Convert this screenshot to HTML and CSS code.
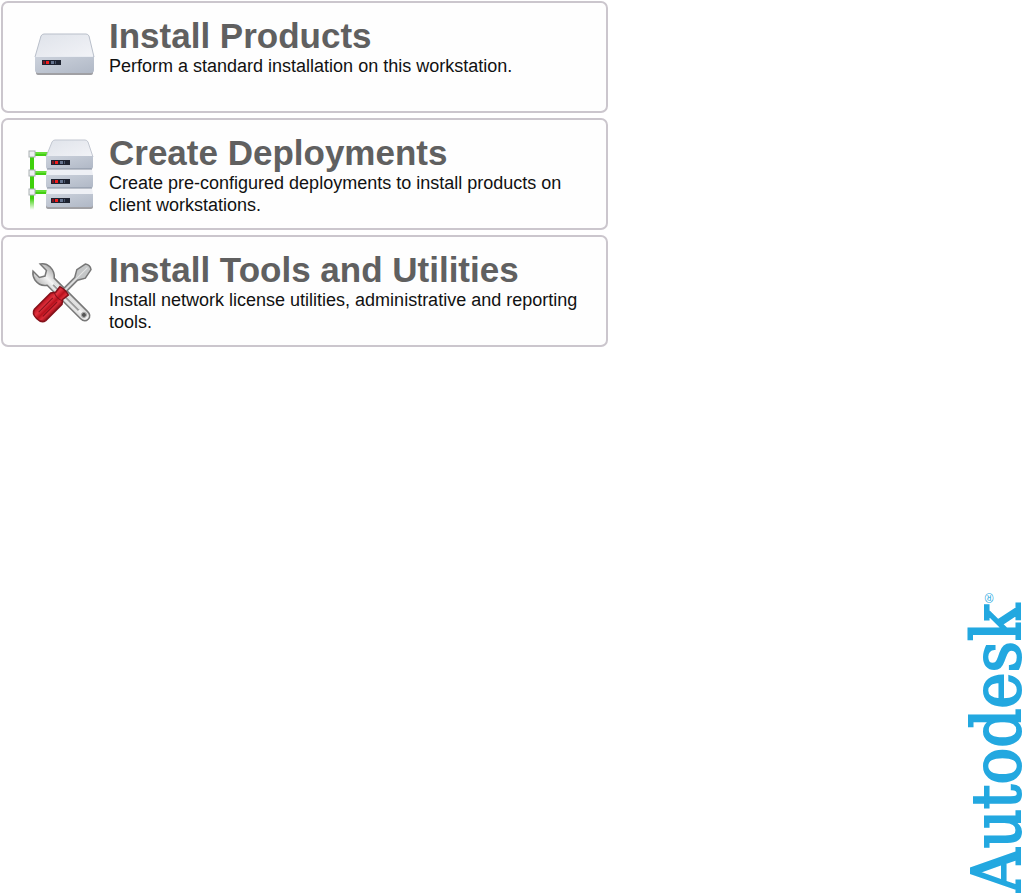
FILE: index.html
```html
<!DOCTYPE html>
<html lang="en">
<head>
    <meta charset="UTF-8">
    <meta name="viewport" content="width=device-width, initial-scale=1.0">
    <title>Autodesk Setup</title>
    <link rel="stylesheet" href="styles.css">
</head>
<body>
    <!-- shared icon parts -->
    <svg class="defs" width="0" height="0" aria-hidden="true">
        <defs>
            <linearGradient id="top" x1="0" y1="0" x2="1" y2="1">
                <stop offset="0" stop-color="#dfe3ea"/>
                <stop offset="1" stop-color="#f2f3f7"/>
            </linearGradient>
            <linearGradient id="front" x1="0" y1="0" x2="1" y2="1">
                <stop offset="0" stop-color="#ccd2dc"/>
                <stop offset="1" stop-color="#b0b8c6"/>
            </linearGradient>
            <linearGradient id="cable" x1="0" y1="0" x2="0" y2="1">
                <stop offset="0.8" stop-color="#3fd00c"/>
                <stop offset="1" stop-color="#3fd00c" stop-opacity="0"/>
            </linearGradient>
            <linearGradient id="steel" x1="0" y1="0" x2="1" y2="0">
                <stop offset="0" stop-color="#bcbcbc"/>
                <stop offset="0.5" stop-color="#f4f4f4"/>
                <stop offset="1" stop-color="#b0b0b0"/>
            </linearGradient>
            <linearGradient id="grip" x1="0" y1="0" x2="1" y2="0">
                <stop offset="0" stop-color="#b80f1c"/>
                <stop offset="0.3" stop-color="#e23440"/>
                <stop offset="0.55" stop-color="#b9101c"/>
                <stop offset="0.75" stop-color="#db2c38"/>
                <stop offset="1" stop-color="#96101a"/>
            </linearGradient>
            <g id="panel">
                <rect width="19" height="5" fill="#1d2230"/>
                <rect x="1" y="1" width="2" height="3" fill="#7c1520"/>
                <rect x="4" y="1" width="3" height="3" fill="#f51c1c"/>
                <rect x="9" y="1" width="3" height="3" fill="#65738e"/>
                <rect x="13" y="1" width="1" height="3" fill="#48546c"/>
            </g>
        </defs>
    </svg>

    <div class="page">
        <main class="menu">
            <a class="card" href="#products">
                <svg class="icon" viewBox="0 0 70 76" aria-hidden="true">
                    <path d="M9 45h57v3q0 2-3 2H12q-3 0-3-2z" fill="#77787e" opacity="0.7"/>
                    <path d="M14 11q1-2 3-2h42q2 0 3 2l5 21H8z" fill="url(#top)" stroke="#b9bfca"/>
                    <path d="M8 31h59v14q0 3-3 3H11q-3 0-3-3z" fill="url(#front)"/>
                    <path d="M9 31.500h57" stroke="#e9ecf2"/>
                    <use href="#panel" x="15" y="35"/>
                </svg>
                <span class="text">
                    <strong class="title">Install Products</strong>
                    <span class="desc">Perform a standard installation on this workstation.</span>
                </span>
            </a>

            <a class="card" href="#deployments">
                <svg class="icon" viewBox="0 1 70 76" aria-hidden="true">
                    <path d="M3 11h4v58H3z" fill="url(#cable)"/>
                    <path d="M5 13h16M5 32h16M5 51h16" stroke="#43cf12" stroke-width="4"/>
                    <path d="M8 12h12M8 31h12M8 50h12" stroke="#8af05e"/>
                    <g fill="#eef0f2" stroke="#a9afb2">
                        <rect x="2" y="10" width="6" height="6"/>
                        <rect x="2" y="29" width="6" height="6"/>
                        <rect x="2" y="48" width="6" height="6"/>
                    </g>
                    <path d="M19 64h47v2q0 2-3 2H22q-3 0-3-2z" fill="#77787e" opacity="0.7"/>
                    <path d="M25 1q1-2 3-2h30q2 0 3 2l5 15H19z" fill="url(#top)" stroke="#c2c7d1"/>
                    <path d="M19 15h47v11q0 2-2 2H21q-2 0-2-2z" fill="url(#front)"/>
                    <path d="M20 28h45l1 6H19z" fill="#eef0f5"/>
                    <path d="M19 34h47v11q0 2-2 2H21q-2 0-2-2z" fill="url(#front)"/>
                    <path d="M20 47h45l1 6H19z" fill="#eef0f5"/>
                    <path d="M19 53h47v11q0 2-2 2H21q-2 0-2-2z" fill="url(#front)"/>
                    <path d="M20 28h45M20 47h45" stroke="#858e9e"/>
                    <use href="#panel" x="24" y="19"/>
                    <use href="#panel" x="24" y="38"/>
                    <use href="#panel" x="24" y="57"/>
                </svg>
                <span class="text">
                    <strong class="title">Create Deployments</strong>
                    <span class="desc">Create pre-configured deployments to install products on client workstations.</span>
                </span>
            </a>

            <a class="card" href="#tools">
                <svg class="icon" viewBox="0 0 70 76" aria-hidden="true">
                    <!-- wrench -->
                    <g transform="translate(35 34) rotate(-45)">
                        <path d="M-5-16Q-11-20-10-28Q-9-33-5-36V-27L0-24L5-27V-36Q10-33 10-27Q10-20 5-16V31Q5 37 0 37Q-5 37-5 31Z" fill="url(#steel)" stroke="#777" stroke-width="1.500"/>
                        <path d="M0-12V24" stroke="#9d9d9d" stroke-width="3"/>
                        <path d="M1-12V24" stroke="#f5f5f5"/>
                        <circle cy="31" r="2.500" fill="#555" stroke="#aaa"/>
                    </g>
                    <!-- screwdriver -->
                    <g transform="translate(35 34) rotate(45)">
                        <path d="M-2 0V-20L-6-27L-4-37Q0-40 4-37L6-27L2-20V0Z" fill="#c4c6c7" stroke="#777" stroke-width="1.500"/>
                        <path d="M0-36V-2" stroke="#e5e5e5"/>
                        <path d="M-6-3Q0-5 6-3L5 4L8 8V31Q7 36 0 36Q-7 36-8 31V8L-5 4Z" fill="url(#grip)" stroke="#84111a" stroke-width="1.500"/>
                        <path d="M-3 10V30M3 10V30" stroke="#86101a"/>
                        <path d="M-6 5Q0 8 6 5" fill="none" stroke="#86101a"/>
                    </g>
                </svg>
                <span class="text">
                    <strong class="title">Install Tools and Utilities</strong>
                    <span class="desc">Install network license utilities, administrative and reporting tools.</span>
                </span>
            </a>
        </main>

        <div class="brand">Autodesk<sup class="reg">®</sup></div>
    </div>
</body>
</html>
```
FILE: styles.css
```css
* {
    box-sizing: border-box;
}
body {
    margin: 0;
    background: #fff;
    font-family: "Liberation Sans", Arial, sans-serif;
    color: #111;
}
.defs {
    position: absolute;
}
.page {
    display: flex;
    justify-content: space-between;
    min-height: 100vh;
}
.menu {
    display: flex;
    flex-direction: column;
    gap: 5px;
    flex: 0 1 609px;
    padding: 1px;
}
.card {
    display: flex;
    align-items: flex-start;
    min-height: 112px;
    padding: 14px 24px 0 24px;
    border: 2px solid #cbc6cd;
    border-radius: 7px;
    background: #fefefe;
    color: inherit;
    text-decoration: none;
}
.icon {
    flex: none;
    width: 70px;
    height: 76px;
    margin-top: 8px;
    overflow: visible;
}
.text {
    padding-left: 12px;
}
.title {
    display: block;
    font-size: 35px;
    line-height: 38px;
    color: #606060;
}
.desc {
    display: block;
    font-size: 18px;
    line-height: 22px;
}
.brand {
    align-self: flex-end;
    writing-mode: vertical-rl;
    transform: rotate(180deg);
    font-family: "DejaVu Serif Condensed", "DejaVu Serif", serif;
    font-size: 68px;
    line-height: 50px;
    color: #23a8e0;
    -webkit-text-stroke: 2px #23a8e0;
    white-space: nowrap;
}
.reg {
    font-family: "Liberation Sans", Arial, sans-serif;
    font-size: 12px;
    line-height: 12px;
    vertical-align: 8px;
    -webkit-text-stroke: 0;
}
```
